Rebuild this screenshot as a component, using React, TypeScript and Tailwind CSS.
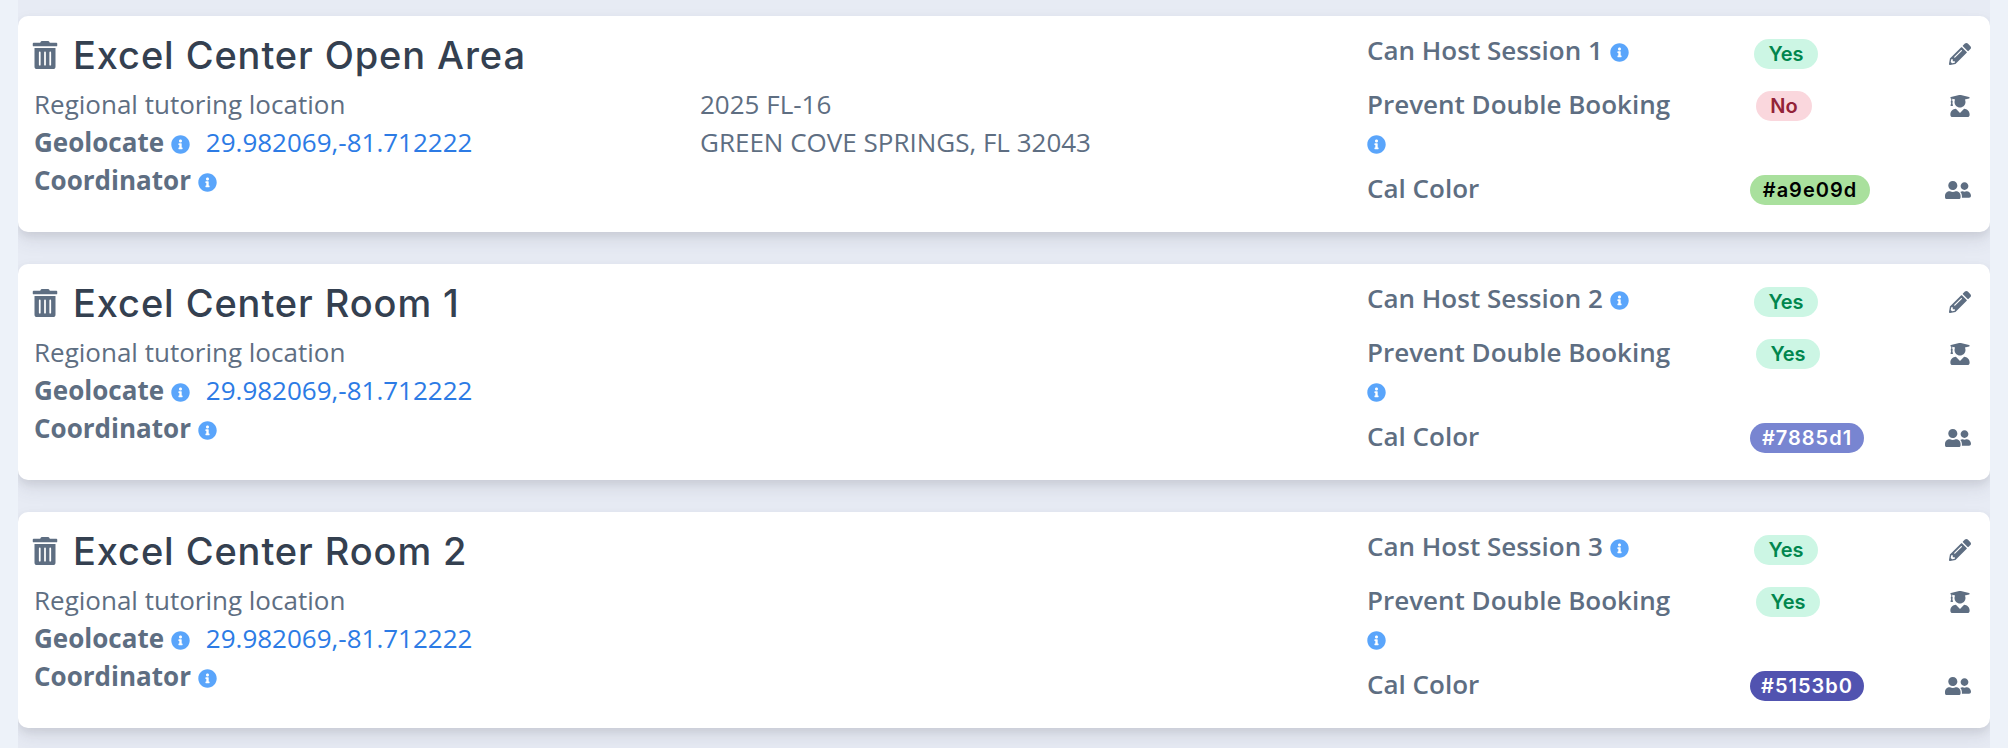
import { FaInfoCircle, FaPencilAlt, FaTrashAlt, FaUserFriends, FaUserGraduate } from "react-icons/fa";

interface Room {
  name: string;
  session: number;
  preventDouble: boolean;
  color: string;
  colorText: string;
  colorWidth: string;
  address?: string[];
}

const rooms: Room[] = [
  {
    name: "Excel Center Open Area",
    session: 1,
    preventDouble: false,
    color: "#a9e09d",
    colorText: "text-black",
    colorWidth: "w-[120px]",
    address: ["2025 FL-16", "GREEN COVE SPRINGS, FL 32043"],
  },
  {
    name: "Excel Center Room 1",
    session: 2,
    preventDouble: true,
    color: "#7885d1",
    colorText: "text-white",
    colorWidth: "w-[114px]",
  },
  {
    name: "Excel Center Room 2",
    session: 3,
    preventDouble: true,
    color: "#5153b0",
    colorText: "text-white",
    colorWidth: "w-[114px]",
  },
];

function Info() {
  return <FaInfoCircle className="inline-block align-[-2px] text-[19px] text-[#5aa5fb]" />;
}

function YesNo({ value, className = "" }: { value: boolean; className?: string }) {
  return (
    <span
      className={`flex h-[30px] items-center justify-center rounded-[15px] font-['Inter'] text-[20px] font-semibold ${
        value ? "w-16 bg-[#ccf6e4] text-[#00864e]" : "w-14 bg-[#fad7dd] text-[#932338]"
      } ${className}`}
    >
      {value ? "Yes" : "No"}
    </span>
  );
}

function RoomCard({ room }: { room: Room }) {
  return (
    <div className="flex h-[216px] shrink-0 rounded-[10px] bg-white pl-4 pt-[17px] shadow-[0_9px_18px_0_rgba(65,69,88,0.1),0_4px_8px_0_rgba(0,0,0,0.07)]">
      <div className="w-[666px] shrink-0">
        <div className="-ml-[3px] flex h-11 items-center">
          <FaTrashAlt className="text-[28px] text-[#5e6e82]" />
          <h2 className="ml-[14px] font-['Inter'] text-[38px] leading-[44px] font-medium tracking-[0.9px] text-[#344050]">
            {room.name}
          </h2>
        </div>
        <p className="mt-[8px]">Regional tutoring location</p>
        <p>
          <b className="font-bold">Geolocate</b> <Info />
          <span className="ml-4 text-[#2c7be5]">29.982069,-81.712222</span>
        </p>
        <p>
          <b className="font-bold">Coordinator</b> <Info />
        </p>
      </div>
      <div className="w-[667px] shrink-0 pt-[52px]">
        {room.address?.map((line) => (
          <p key={line}>{line}</p>
        ))}
      </div>
      <div className="grid flex-1 grid-cols-[383px_1fr_auto] content-start pr-[19px] font-semibold">
        <p className="-mt-[2px] h-[54px]">
          Can Host Session {room.session} <Info />
        </p>
        <YesNo value className="ml-[4px] mt-[6px]" />
        <FaPencilAlt className="ml-[1px] mt-[10px] justify-self-end text-[22px] text-[#5e6e82]" />
        <p className="h-[85px] w-[320px]">
          Prevent Double Booking <Info />
        </p>
        <YesNo value={room.preventDouble} className="ml-[6px] mt-[6px]" />
        <FaUserGraduate className="mt-[10px] justify-self-end text-[22px] text-[#5e6e82]" />
        <p className="-mt-px">Cal Color</p>
        <span
          className={`mt-[5px] flex h-[30px] items-center justify-center rounded-[15px] font-['Inter'] text-[20px] font-semibold tracking-[1px] ${room.colorWidth} ${room.colorText}`}
          style={{ backgroundColor: room.color }}
        >
          {room.color}
        </span>
        <FaUserFriends className="mt-[7px] justify-self-end text-[26px] text-[#5e6e82]" />
      </div>
    </div>
  );
}

export default function App() {
  return (
    <div className="h-[748px] overflow-hidden bg-[#edf2f9] px-[18px] font-['Open_Sans',sans-serif] text-[26px] leading-[38px] text-[#5e6e82]">
      <div className="flex h-full flex-col gap-8 overflow-hidden bg-[#e7ebf4] pt-4">
        {rooms.map((room) => (
          <RoomCard key={room.name} room={room} />
        ))}
      </div>
    </div>
  );
}
